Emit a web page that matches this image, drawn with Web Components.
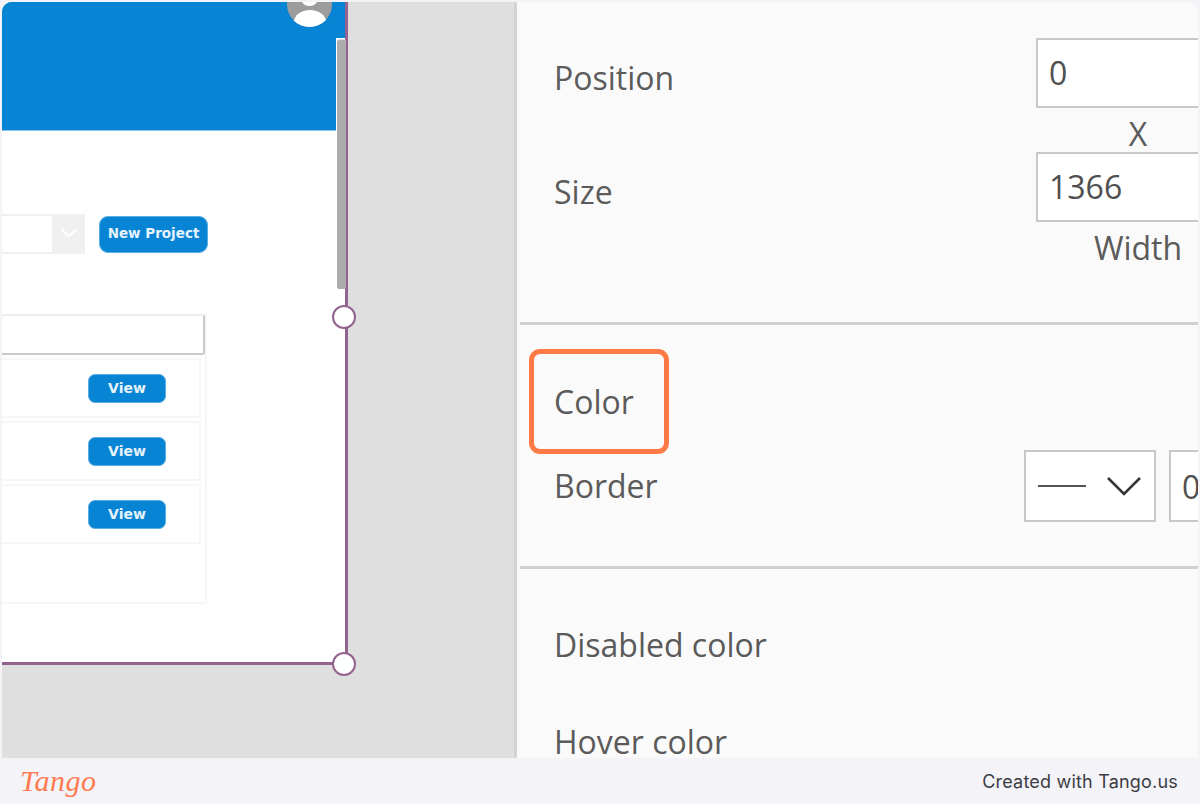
<!DOCTYPE html>
<html><head><meta charset="utf-8">
<style>
html,body{margin:0;padding:0;background:#f3f3f8}
body{width:1200px;height:804px;overflow:hidden}
</style></head>
<body>
<tango-frame>
  <app-canvas slot="canvas"></app-canvas>
  <prop-panel slot="panel"></prop-panel>
</tango-frame>
<script>
function def(name, css, html){
  customElements.define(name, class extends HTMLElement{
    constructor(){super();const s=this.attachShadow({mode:'open'});s.innerHTML='<style>'+css+'</style>'+(typeof html==='function'?html(this):html);}
  });
}
def('tango-frame',`
:host{display:flex;flex-direction:column;width:1200px;height:804px;background:#f3f3f8;font-family:"Inter",sans-serif}
.main{flex:none;height:756px;margin:2px 2px 0;display:grid;grid-template-columns:515px 1fr;border-radius:10px 10px 0 0;overflow:hidden}
footer{flex:1;display:flex;align-items:center;justify-content:space-between;padding:0 22px 0 20px}
.logo{font:italic 400 30px/1 "Liberation Serif",serif;color:#ff7a50;letter-spacing:.5px}
.made{font-size:18px;color:#3c3c44;letter-spacing:.2px}
`,`<div class="main"><slot name="canvas"></slot><slot name="panel"></slot></div>
<footer><span class="logo">Tango</span><span class="made">Created with Tango.us</span></footer>`);

def('app-btn',`
:host{display:inline-flex;align-items:center;justify-content:center;background:#0784d4;color:#e6f2fb;font:700 14px/1 "DejaVu Sans",sans-serif;box-sizing:border-box;border:1px solid #5aaee3}
`,`<slot></slot>`);

def('list-row',`
:host{display:flex;align-items:center;justify-content:flex-end;box-sizing:border-box;height:60px;border:solid #f6f6f9;border-width:2px 2px 2px 0;padding-right:33px;background:#fff}
`,`<slot></slot>`);

def('app-canvas',`
:host{display:block;background:#dfdfdf;position:relative;height:100%;border-right:3px solid #d2d2d2;box-sizing:border-box}
.screen{box-sizing:border-box;width:346px;height:663px;background:#fff;border:solid #93628f;border-width:0 3px 3px 0;display:flex;flex-direction:column;position:relative}
.head{height:128px;background:#0784d4;flex:none;margin-right:9px;border-bottom:1px solid #8ec6ea;box-sizing:content-box;position:relative}
.head::before{content:"";position:absolute;left:0;right:-9px;top:0;height:36px;background:#0784d4}
.toolbar{display:flex;align-items:center;margin-top:83px;height:40px}
.select{width:83px;height:40px;display:flex;background:#f0f0f0;box-sizing:border-box}
.select i{width:50px;height:36px;margin-top:2px;background:#fff;display:block}
.select svg{margin:13px 0 0 7px}
.new{width:109px;height:37px;margin-left:14px;border-radius:9px;font-size:13.5px}
.table{width:205px;margin-top:60px;height:290px;box-sizing:border-box;border-right:2px solid #f6f6f9;border-bottom:2px solid #f6f6f9}
.thead{height:41px;box-sizing:border-box;border:solid #c9c9c9;border-width:2px 2px 2px 0;border-top-color:#eee;border-radius:0 3px 3px 0}
.rows{display:flex;flex-direction:column;gap:3px;margin-top:3px;width:199px}
.view{width:78px;height:29px;border-radius:7px}
.avatar{position:absolute;left:285px;top:-20px;width:45px;height:45px;border-radius:50%;background:#9c9c9c;overflow:hidden}
.avatar b{position:absolute;left:14px;top:-4px;width:17px;height:28px;border-radius:8px;background:#fff}
.avatar u{position:absolute;left:7px;top:28px;width:32px;height:24px;border-radius:50%;background:#fff}
.thumb{position:absolute;left:335px;top:37px;width:9px;height:250px;background:#acacac;border-radius:3px 3px 2px 2px;border-top:1px solid #dcdcdc;box-sizing:border-box}
.grip{position:absolute;width:24px;height:24px;box-sizing:border-box;border-radius:50%;background:#fff;border:2px solid #93628f}
`,`<div class="screen">
<div class="head"></div>
<div class="toolbar"><div class="select"><i></i><svg width="20" height="12" viewBox="0 0 20 12"><path d="M2 2l8 7 8-7" fill="none" stroke="#fff" stroke-width="2"/></svg></div><app-btn class="new">New Project</app-btn></div>
<div class="table"><div class="thead"></div><div class="rows">
<list-row><app-btn class="view">View</app-btn></list-row>
<list-row><app-btn class="view">View</app-btn></list-row>
<list-row><app-btn class="view">View</app-btn></list-row>
</div></div>
<div class="avatar"><b></b><u></u></div>
<div class="thumb"></div>
<div class="grip" style="left:330px;top:303px"></div>
<div class="grip" style="left:330px;top:650px"></div>
</div>`);

def('prop-label',`
:host{display:block;font:400 32px/44px "Open Sans",sans-serif;color:#5b5b5b;white-space:nowrap}
`,`<slot></slot>`);

def('num-input',`
:host{display:flex;align-items:center;box-sizing:border-box;height:70px;background:#fff;border:2px solid #c8c8c8;padding-left:11px;font:400 32px/1 "Open Sans",sans-serif;color:#4f4f4f}
`,`<slot></slot>`);

def('prop-panel',`
:host{display:block;background:#fafafa;height:100%;overflow:hidden;font:400 32px "Open Sans",sans-serif}
section{border-bottom:3px solid #d0d0d0;margin-left:3px;padding-left:34px;box-sizing:border-box;position:relative}
.geo{height:323px;padding-top:36px}
.line{display:grid;grid-template-columns:482px 1fr;align-items:start}
.line prop-label{margin-top:18px}
.caption{font-size:32px;line-height:44px;color:#5b5b5b;text-align:center;width:204px;height:44px;margin-top:4px}
.line+.line{margin-top:0}
.color{height:244px;padding-top:0}
.hl{position:absolute;left:9px;top:24px;width:140px;height:105px;box-sizing:border-box;border:5px solid #ff7a45;border-radius:11px}
.clabel{padding-top:55px}
.bline{display:grid;grid-template-columns:470px 132px 1fr;align-items:center;margin-top:26px}
.drop{box-sizing:border-box;height:72px;background:#fff;border:2px solid #c8c8c8;display:flex;align-items:center;justify-content:center;gap:20px}
.wide{margin-left:13px;border-right:0;justify-content:flex-start;padding-left:11px;color:#4f4f4f}
.rest{padding:54px 0 0 37px}
.rest prop-label+prop-label{margin-top:53px}
`,`<section class="geo">
<div class="line"><prop-label>Position</prop-label><div><num-input>0</num-input><div class="caption">X</div></div></div>
<div class="line" style="margin-top:-4px"><prop-label>Size</prop-label><div><num-input>1366</num-input><div class="caption">Width</div></div></div>
</section>
<section class="color">
<div class="hl"></div>
<prop-label class="clabel">Color</prop-label>
<div class="bline"><prop-label>Border</prop-label>
<div class="drop"><svg width="48" height="4"><rect width="48" height="2" y="1" fill="#555"/></svg><svg width="36" height="22" viewBox="0 0 36 22"><path d="M2 3l16 16L34 3" fill="none" stroke="#333" stroke-width="2.5"/></svg></div>
<div class="drop wide">0</div></div>
</section>
<div class="rest"><prop-label>Disabled color</prop-label><prop-label>Hover color</prop-label></div>`);
</script>
</body></html>
